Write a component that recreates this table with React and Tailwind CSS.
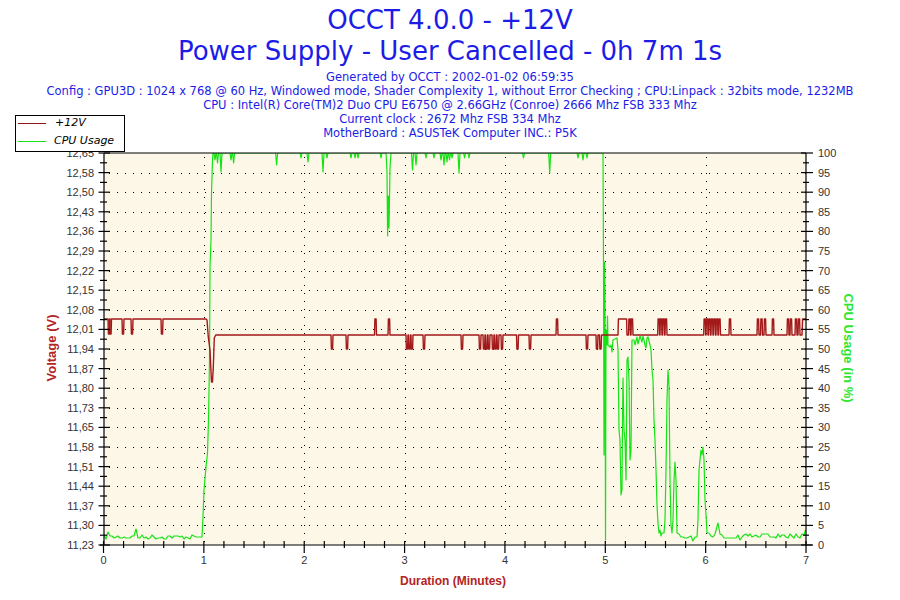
import React from 'react'

const BLUE = '#1c1ce6'
const RED = '#a31818'
const GREEN = '#16e316'
const LABEL = '#333333'

const X0 = 104
const X1 = 806
const Y0 = 153
const Y1 = 545
const xm = (m) => 103.5 + m * 100.36
const yk = (k) => Y1 - k * 19.6

const VOLTS = ['11,23', '11,30', '11,37', '11,44', '11,51', '11,58', '11,65', '11,73', '11,80', '11,87', '11,94',
  '12,01', '12,08', '12,15', '12,22', '12,29', '12,36', '12,43', '12,50', '12,58', '12,65']

// tiny seeded random so the noise is the same every render
const makeRng = (seed) => {
  let s = seed
  return () => {
    s = (s * 16807) % 2147483647
    return s / 2147483647
  }
}

// a flat level with narrow excursions (dips or spikes) to another value
const level = (pts, x0, x1, L, events) => {
  pts.push([x0, L])
  events.forEach(({ a, b, d }) => {
    pts.push([a, L], [a + 0.4, d], [b - 0.4, d], [b, L])
  })
  pts.push([x1, L])
}

const noise = (pts, x0, x1, base, amp, seed, peaks = {}) => {
  const r = makeRng(seed)
  for (let x = x0; x <= x1; x += 2) {
    const p = peaks[x]
    pts.push([x, p ?? base + Math.round((r() - 0.5) * amp)])
  }
}

const ev = (list, d, w = 1) => list.map((x) => ({ a: x - w, b: x + w, d }))

const buildVoltage = () => {
  const pts = []
  level(pts, 104, 206, 319, ev([109, 110.5, 123, 132, 162], 334))
  pts.push([207, 320], [208.3, 337], [210, 350], [211.5, 382], [212.5, 382], [213.3, 367], [214.3, 338], [215.7, 335])
  const dips = ev([332, 347, 407, 409.5, 412, 424, 462, 480, 484, 486.5, 489, 493, 495.5, 498, 502, 517.5, 530, 587, 597, 600.5], 349)
  const spikes = ev([375.5, 389, 557, 629.5, 632, 658.7, 661, 663.5, 666, 704.7, 707, 709.5, 712, 714.5, 717, 719.5,
    730, 758, 761.5, 765, 773, 788, 791, 796, 799], 319)
  const plateau = [{ a: 618, b: 627, d: 319 }]
  const all = [...dips, ...spikes, ...plateau].sort((p, q) => p.a - q.a)
  level(pts, 216, 802, 335, all)
  pts.push([802.6, 319], [806, 319])
  return pts
}

const buildCpu = () => {
  const pts = []
  noise(pts, 104, 200, 537, 4, 7, { 108: 532, 136: 529 })
  pts.push([202, 537], [203, 517], [204, 490], [206, 467], [207.5, 453], [208.5, 420], [209.5, 360], [210, 267],
    [211, 240], [211.5, 193], [212.5, 160], [213, 153])
  const dips = [[215, 160], [217.5, 163], [221, 172], [231, 160], [233.6, 163], [276.6, 165], [301, 158], [308, 162],
    [323, 172], [327, 158], [351, 158], [355, 158], [358, 158], [381, 158], [412.5, 170], [416, 165], [426, 158],
    [434, 158], [441, 160], [444, 165], [447, 162], [449.5, 160], [452, 158], [459, 173], [464.6, 158], [469, 158],
    [523.5, 158], [549.7, 173], [578, 158], [583, 160], [587, 158]]
  dips.forEach(([x, d]) => {
    pts.push([x - 1, 153], [x, d], [x + 1, 153])
    if (x === 381) {
      pts.push([386, 153], [387, 172], [387.6, 236], [388.3, 196], [389, 228], [390, 168], [391, 153])
    }
  })
  pts.push([602, 153], [603, 153], [603.5, 262], [604, 455], [604.5, 262], [605, 290], [605.5, 540], [606, 330],
    [607, 345], [607.5, 316], [608, 345], [610, 347], [611, 345], [612, 352], [613, 340], [617, 338], [618, 350],
    [619, 430], [620, 440], [621, 495], [622, 490], [622.5, 420], [623, 378], [624, 430], [625, 440], [626, 480],
    [627, 360], [628, 357], [629, 380], [630, 460], [631, 450], [632, 340], [634, 340], [635, 345], [637, 337],
    [638, 344], [640, 336], [642, 342], [643, 336], [645, 345], [646, 348], [647, 338], [648, 337], [650, 345],
    [651, 350], [652, 370], [653, 380], [654, 420], [655, 440], [656, 470], [657, 505], [658, 523], [659, 533],
    [660, 530], [661, 536], [662, 533], [664, 533], [665, 520], [666, 470], [667, 400], [668, 370], [669, 385],
    [670, 480], [671, 525], [672, 533], [673, 520], [674, 480], [675, 462], [676, 480], [677, 533])
  noise(pts, 679, 697, 536, 4, 13, { 693: 541 })
  pts.push([698, 520], [699, 470], [700, 460], [701, 450], [702, 455], [703, 447], [704, 460], [705, 500],
    [706, 515], [707, 533])
  noise(pts, 709, 716, 535, 4, 29)
  pts.push([718, 523])
  noise(pts, 720, 804, 536, 5, 41, { 740: 540 })
  pts.push([805.5, 530])
  return pts
}

const toPath = (pts) => pts.map(([x, y], i) => `${i ? 'L' : 'M'}${x.toFixed(1)} ${y.toFixed(1)}`).join(' ')

const VOLT_PATH = toPath(buildVoltage())
const CPU_PATH = toPath(buildCpu())

const INFO = [
  'Generated by OCCT : 2002-01-02 06:59:35',
  'Config : GPU3D : 1024 x 768 @ 60 Hz, Windowed mode, Shader Complexity 1, without Error Checking ; CPU:Linpack : 32bits mode, 1232MB',
  'CPU : Intel(R) Core(TM)2 Duo CPU E6750 @ 2.66GHz (Conroe) 2666 Mhz FSB 333 Mhz',
  'Current clock : 2672 Mhz FSB 334 Mhz',
  'MotherBoard : ASUSTeK Computer INC.: P5K',
]

const Legend = () => (
  <div className="absolute left-[15px] top-[115px] w-[110px] h-[37px] border border-black bg-white flex flex-col gap-[3px] italic text-[11px] text-black"
    style={{ fontFamily: '"DejaVu Sans", Verdana, sans-serif' }}>
    <div className="h-[15px] flex items-center">
      <span className="ml-[2px] w-[28px] h-px bg-[#8e1414]" />
      <span className="ml-[9px]">+12V</span>
    </div>
    <div className="h-[15px] flex items-center">
      <span className="ml-[2px] w-[28px] h-px bg-[#16e316]" />
      <span className="ml-[8px]">CPU Usage</span>
    </div>
  </div>
)

const Chart = () => {
  const major = Array.from({ length: 21 }, (_, k) => yk(k))
  const minor = Array.from({ length: 20 }, (_, k) => yk(k + 0.5))
  const minutes = Array.from({ length: 8 }, (_, m) => m)
  const subTicks = Array.from({ length: 36 }, (_, i) => i).filter((i) => i % 5 !== 0).map((i) => xm(i / 5))
  const font = { fontFamily: '"Liberation Sans", Arial, sans-serif' }

  return (
    <svg width="900" height="460" viewBox="0 140 900 460" className="block" style={font}>
      <defs>
        <clipPath id="plot">
          <rect x={X0} y={Y0} width={X1 - X0} height={Y1 - Y0} />
        </clipPath>
      </defs>
      <rect x={X0} y={Y0} width={X1 - X0} height={Y1 - Y0} fill="#fdf7e8" />

      {/* dotted grid */}
      <g stroke="#000" strokeWidth="1" strokeDasharray="1 7">
        {major.slice(1, 20).map((y) => (
          <line key={y} x1={X0 + 5} x2={X1} y1={Math.round(y) + 0.5} y2={Math.round(y) + 0.5} />
        ))}
        {minutes.slice(1, 7).map((m) => (
          <line key={m} x1={Math.round(xm(m)) + 0.5} x2={Math.round(xm(m)) + 0.5} y1={Y0 + 4} y2={Y1} />
        ))}
      </g>

      <g clipPath="url(#plot)" fill="none" strokeLinejoin="round">
        <path d={CPU_PATH} stroke={GREEN} strokeWidth="1.2" />
        <path d={VOLT_PATH} stroke={RED} strokeWidth="1.4" />
      </g>

      {/* axes */}
      <g stroke="#000" strokeWidth="1.2">
        <line x1={X0} x2={X1} y1={Y0} y2={Y0} />
        <line x1={X0} x2={X0} y1={Y0} y2={Y1} />
        <line x1={X1} x2={X1} y1={Y0} y2={Y1} />
        <line x1={100} x2={812} y1={Y1} y2={Y1} />
        {major.map((y) => (
          <g key={y}>
            <line x1={98.5} x2={110} y1={y} y2={y} />
            <line x1={801} x2={813} y1={y} y2={y} />
          </g>
        ))}
        {minor.map((y) => (
          <g key={y}>
            <line x1={100} x2={107} y1={y} y2={y} />
            <line x1={803} x2={809} y1={y} y2={y} />
          </g>
        ))}
        {minutes.map((m) => (
          <line key={m} x1={xm(m)} x2={xm(m)} y1={541} y2={553} />
        ))}
        {subTicks.map((x) => (
          <line key={x} x1={x} x2={x} y1={541} y2={548} />
        ))}
      </g>

      <g fontSize="11" fill={LABEL}>
        {VOLTS.map((v, k) => (
          <text key={v} x={94} y={yk(k) + 4} textAnchor="end">{v}</text>
        ))}
        {VOLTS.map((_, k) => (
          <text key={k} x={818} y={yk(k) + 4}>{k * 5}</text>
        ))}
        {minutes.map((m) => (
          <text key={m} x={xm(m)} y={564} textAnchor="middle">{m}</text>
        ))}
      </g>

      <text transform="translate(56 348) rotate(-90)" textAnchor="middle" fontSize="13" fontWeight="700" fill="#b32424">
        Voltage (V)
      </text>
      <text transform="translate(844 348) rotate(90)" textAnchor="middle" fontSize="13" fontWeight="700" fill="#2ee62e">
        CPU Usage (in %)
      </text>
      <text x={453} y={585} textAnchor="middle" fontSize="12" fontWeight="700" fill="#b32424">
        Duration (Minutes)
      </text>
    </svg>
  )
}

export default function App() {
  return (
    <div className="relative w-[900px] h-[600px] bg-white overflow-hidden">
      <div className="h-[140px] flex flex-col items-center pt-[5px]" style={{ fontFamily: '"DejaVu Sans", Verdana, sans-serif', color: BLUE }}>
        <h1 className="text-[26px] leading-[31px] font-normal">OCCT 4.0.0 - +12V</h1>
        <h2 className="text-[26px] leading-[31px] font-normal">Power Supply - User Cancelled - 0h 7m 1s</h2>
        <div className="mt-[3px] flex flex-col items-center text-[11.5px] leading-[14px]">
          {INFO.map((line) => (
            <p key={line}>{line}</p>
          ))}
        </div>
      </div>
      <Legend />
      <Chart />
    </div>
  )
}
